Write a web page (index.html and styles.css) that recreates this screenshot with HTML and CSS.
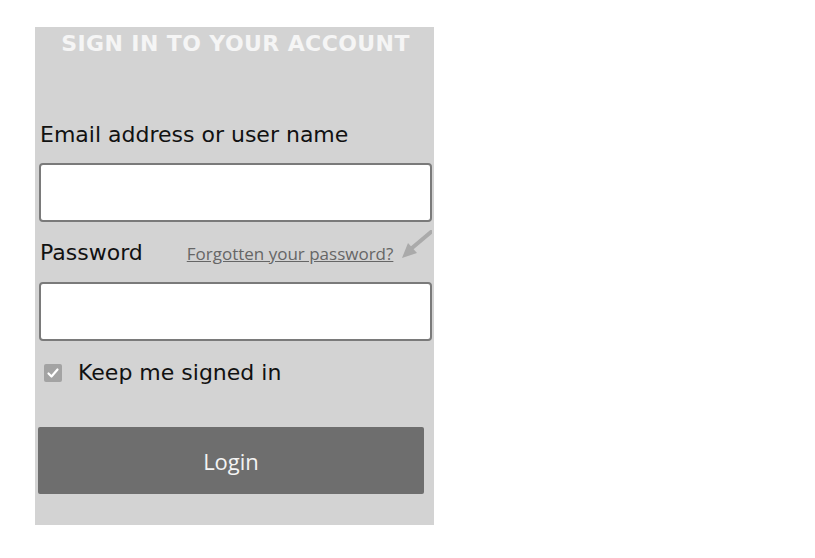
FILE: index.html
```html
<!DOCTYPE html>
<html>
<head>
<meta charset="utf-8">
<link rel="stylesheet" href="styles.css">
</head>
<body>
<div class="panel">
  <h1 class="title">SIGN IN TO YOUR ACCOUNT</h1>
  <label class="label email-label">Email address or user name</label>
  <input class="field" type="text">
  <div class="pw-row">
    <span class="label pw-label">Password</span>
    <a class="forgot" href="#">Forgotten your password?</a>
    <svg class="arrow" width="30" height="30" viewBox="0 0 30 30">
      <path d="M29 2 L10 18" stroke="#aaaaaa" stroke-width="4" stroke-linecap="round" fill="none"/>
      <path d="M0 28 L6 13 L15 23 Z" fill="#aaaaaa"/>
    </svg>
  </div>
  <input class="field pw-field" type="password">
  <div class="keep">
    <span class="check">
      <svg width="18" height="18" viewBox="0 0 18 18"><path d="M4.5 9.5 L7.5 12.5 L13.5 5.5" stroke="#fff" stroke-width="2.2" fill="none" stroke-linecap="round" stroke-linejoin="round"/></svg>
    </span>
    <span class="label">Keep me signed in</span>
  </div>
  <button class="login">Login</button>
</div>
</body>
</html>
```
FILE: styles.css
```css
html, body {
  margin: 0;
  padding: 0;
  background: #ffffff;
}
.panel {
  margin: 27px 0 0 35px;
  width: 399px;
  height: 498px;
  background: #d3d3d3;
  box-sizing: border-box;
  padding: 4px 2px 0 4px;
  display: flex;
  flex-direction: column;
}
.title {
  margin: 0;
  font-family: "DejaVu Sans", Verdana, sans-serif;
  font-weight: bold;
  font-size: 22px;
  line-height: 26px;
  letter-spacing: 0.4px;
  color: #f5f5f5;
  text-align: center;
}
.label {
  font-family: "DejaVu Sans", Verdana, sans-serif;
  font-size: 22px;
  color: #111;
  line-height: 26px;
}
.email-label {
  display: block;
  margin-top: 65px;
  margin-left: 1px;
}
.field {
  display: block;
  margin: 15px 0 0 0;
  width: 393px;
  height: 59px;
  box-sizing: border-box;
  border: 2px solid #7a7a7a;
  border-radius: 4px;
  background: #fff;
  padding: 0;
}
.pw-row {
  display: flex;
  align-items: baseline;
  margin-top: 8px;
  white-space: nowrap;
}
.pw-row > * {
  flex-shrink: 0;
}
.pw-label {
  margin-left: 1px;
}
.forgot {
  font-family: "Open Sans", sans-serif;
  font-size: 17px;
  color: #666;
  margin-left: 44px;
  line-height: 22px;
}
.arrow {
  margin-left: 9px;
}
.pw-field {
  margin-top: 16px;
}
.keep {
  display: flex;
  align-items: center;
  margin-top: 19px;
  margin-left: 5px;
}
.check {
  width: 18px;
  height: 18px;
  border-radius: 2px;
  background: #a3a3a3;
  display: flex;
  margin-right: 16px;
}
.login {
  margin: 41px 0 0 -1px;
  width: 386px;
  height: 67px;
  background: #6e6e6e;
  border: none;
  border-radius: 2px;
  color: #f4f4f4;
  font-family: "Open Sans", sans-serif;
  font-size: 22px;
  padding: 0;
}
```
